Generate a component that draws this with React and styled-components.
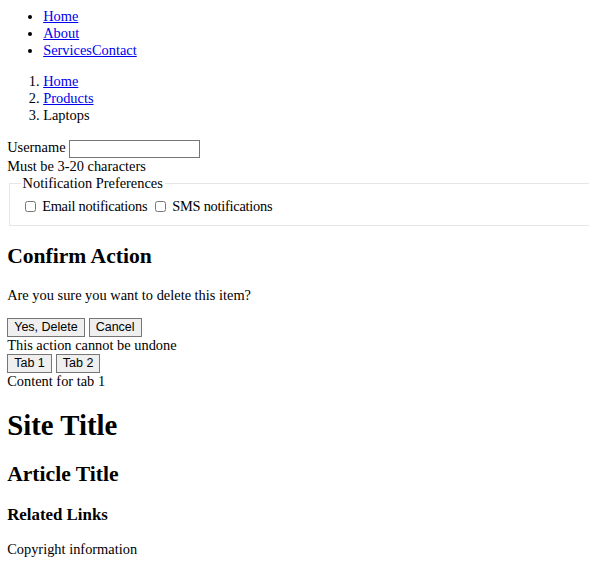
import React, { useState } from 'react';
import styled, { createGlobalStyle } from 'styled-components';

const GlobalStyle = createGlobalStyle`
  html {
    overflow: hidden;
  }
  body {
    margin: 8px 7.2px 7.2px;
    font-family: "Liberation Serif", "Times New Roman", serif;
    font-size: 14.4px;
    color: #000;
    background: #fff;
  }
`;

const NavList = styled.ul`
  margin: 0 0 1em;
  padding-left: 36px;
  list-style: disc;
`;

const Crumbs = styled.ol`
  margin: 1em 0;
  padding-left: 36px;
`;

const Link = styled.a`
  color: #0000ee;
  text-decoration: underline;
`;

const Field = styled.div``;

const TextInput = styled.input`
  font-family: "Liberation Sans", Arial, sans-serif;
  font-size: 12px;
  width: 125px;
  height: 14px;
  padding: 1px 2px;
  margin: 0;
  border: 1px solid #767676;
  border-radius: 0;
  vertical-align: -1px;
`;

const Fieldset = styled.fieldset`
  margin: 0 -80px 0 1.8px;
  padding: 5px 10.8px 9px;
  border: 1px solid #e6e6e6;
`;

const Legend = styled.legend`
  padding: 0 1.8px;
`;

const Option = styled.label`
  letter-spacing: -0.25px;
`;

const Check = styled.input`
  width: 11px;
  height: 11px;
  margin: 4px 3px 4px 4px;
  vertical-align: -1px;
`;

const Heading = styled.h2`
  font-size: 21.6px;
  margin: 0.83em 0;
`;

const Title = styled.h1`
  font-size: 28.8px;
  margin: 0.67em 0;
`;

const SubHeading = styled.h3`
  font-size: 16.85px;
  margin: 1em 0;
`;

const Text = styled.p`
  margin: 1em 0;
`;

const Button = styled.button`
  font-family: "Liberation Sans", Arial, sans-serif;
  font-size: 12.5px;
  line-height: 15px;
  padding: 1px 6px;
  margin: 0;
  background: #efefef;
  border: 1px solid #767676;
  border-radius: 0;
  color: #000;
  & + & {
    margin-left: 4px;
  }
`;

const Row = styled.div``;

export default function App() {
  const [tab, setTab] = useState(1);
  return (
    <>
      <GlobalStyle />
      <nav>
        <NavList>
          <li><Link href="#">Home</Link></li>
          <li><Link href="#">About</Link></li>
          <li><Link href="#">Services</Link><Link href="#">Contact</Link></li>
        </NavList>
      </nav>
      <nav>
        <Crumbs>
          <li><Link href="#">Home</Link></li>
          <li><Link href="#">Products</Link></li>
          <li>Laptops</li>
        </Crumbs>
      </nav>
      <Field>
        <label htmlFor="username">Username</label> <TextInput id="username" type="text" />
        <div>Must be 3-20 characters</div>
      </Field>
      <Fieldset>
        <Legend>Notification Preferences</Legend>
        <Option><Check type="checkbox" /> Email notifications</Option>{' '}
        <Option><Check type="checkbox" /> SMS notifications</Option>
      </Fieldset>
      <div>
        <Heading>Confirm Action</Heading>
        <Text>Are you sure you want to delete this item?</Text>
        <Row>
          <Button>Yes, Delete</Button>
          <Button>Cancel</Button>
        </Row>
        <div>This action cannot be undone</div>
      </div>
      <div>
        <Row>
          <Button onClick={() => setTab(1)}>Tab 1</Button>
          <Button onClick={() => setTab(2)}>Tab 2</Button>
        </Row>
        <div>Content for tab {tab}</div>
      </div>
      <Title>Site Title</Title>
      <Heading>Article Title</Heading>
      <SubHeading>Related Links</SubHeading>
      <Text>Copyright information</Text>
    </>
  );
}
